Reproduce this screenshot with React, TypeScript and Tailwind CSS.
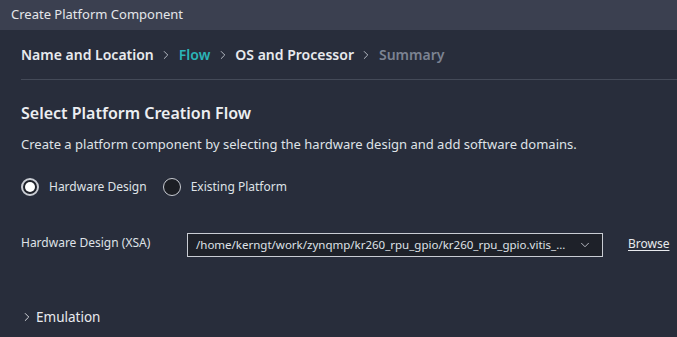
import { ChevronDown, ChevronRight } from 'lucide-react'

const font = { fontFamily: '"Noto Sans", "Open Sans", sans-serif' }

function Crumb({ label, state }: { label: string; state: 'done' | 'active' | 'todo' }) {
  const color =
    state === 'active' ? 'text-[#2bb5b8]' : state === 'todo' ? 'text-[#7c8392]' : 'text-[#e8eaee]'
  return <span className={`text-[14px] font-semibold ${color}`}>{label}</span>
}

function Sep() {
  return <ChevronRight className="mx-[5.5px] h-[14px] w-[14px] text-[#c7cbd3]" strokeWidth={1.5} />
}

function Radio({ checked, label }: { checked?: boolean; label: string }) {
  return (
    <label className="flex items-center gap-[10px]">
      <span
        className={
          checked
            ? 'flex h-[18px] w-[18px] items-center justify-center rounded-full border-2 border-[#c9ccd3] bg-[#1e2129]'
            : 'h-[18px] w-[18px] rounded-full border border-[#c9ccd3] bg-[#1c1e24]'
        }
      >
        {checked ? <span className="h-[10px] w-[10px] rounded-full bg-white" /> : null}
      </span>
      <span className="text-[12px] text-[#dfe2e7]">{label}</span>
    </label>
  )
}

export default function App() {
  return (
    <div className="h-[337px] w-[677px] overflow-hidden bg-[#282d3b]" style={font}>
      <div className="flex h-[30px] items-center bg-[#3b4050] px-[11px] text-[13px] text-[#e4e6ea]">
        Create Platform Component
      </div>

      <div className="ml-[21px] flex h-[50px] items-center border-b border-[#444a58]">
        <Crumb label="Name and Location" state="done" />
        <Sep />
        <Crumb label="Flow" state="active" />
        <Sep />
        <Crumb label="OS and Processor" state="done" />
        <Sep />
        <Crumb label="Summary" state="todo" />
      </div>

      <div className="px-[21px] pt-[22px]">
        <h2 className="text-[16px] font-semibold leading-[22px] text-[#eceef1]">
          Select Platform Creation Flow
        </h2>
        <p className="mt-[11px] text-[13px] leading-[18px] text-[#dfe2e7]">
          Create a platform component by selecting the hardware design and add software domains.
        </p>

        <div className="mt-[25px] flex items-center gap-[16px]">
          <Radio checked label="Hardware Design" />
          <Radio label="Existing Platform" />
        </div>

        <div className="mt-[37px] flex items-start">
          <span className="w-[166px] shrink-0 pt-[1px] text-[12px] text-[#dfe2e7]">Hardware Design (XSA)</span>
          <div className="flex h-[24px] w-[416px] shrink-0 items-center border border-[#c9ccd3] bg-[#1e2129] pl-[8px] pr-[10px]">
            <span className="min-w-0 flex-1 whitespace-nowrap text-[11.5px] text-[#dfe2e7]">
              /home/kerngt/work/zynqmp/kr260_rpu_gpio/kr260_rpu_gpio.vitis_...
            </span>
            <ChevronDown className="ml-[6px] h-[14px] w-[14px] shrink-0 text-[#c9ccd3]" strokeWidth={1.5} />
          </div>
          <span className="ml-[25px] pt-[2px] text-[12px] text-[#e8eaee] underline underline-offset-2">
            Browse
          </span>
        </div>

        <div className="mt-[50px] flex items-center text-[13.5px] text-[#e8eaee]">
          <ChevronRight className="-ml-[1px] mr-[2px] h-[14px] w-[14px]" strokeWidth={1.5} />
          Emulation
        </div>
      </div>
    </div>
  )
}
